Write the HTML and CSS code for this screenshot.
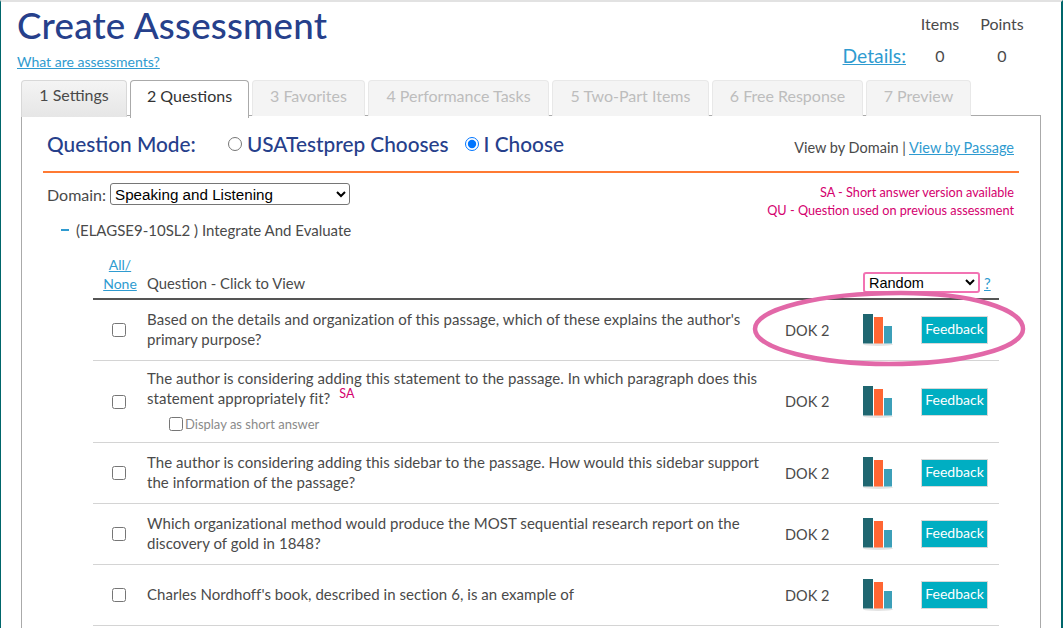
FILE: index.html
```html
<!DOCTYPE html>
<html lang="en">
<head>
<meta charset="utf-8">
<title>Create Assessment</title>
<link rel="stylesheet" href="styles.css">
</head>
<body>
<div class="page">
  <header class="head">
    <div class="head-left">
      <h1 class="title">Create Assessment</h1>
      <a class="link help" href="#">What are assessments?</a>
    </div>
    <div class="totals">
      <span></span><span class="tot-h">Items</span><span class="tot-h">Points</span>
      <a class="link details" href="#">Details:</a><span class="tot-v">0</span><span class="tot-v">0</span>
    </div>
  </header>
  <nav class="tabs">
    <div class="tab tab-done t1">1 Settings</div>
    <div class="tab tab-on t2">2 Questions</div>
    <div class="tab t3">3 Favorites</div>
    <div class="tab t4">4 Performance Tasks</div>
    <div class="tab t5">5 Two-Part Items</div>
    <div class="tab t6">6 Free Response</div>
    <div class="tab t7">7 Preview</div>
  </nav>
  <main class="panel">
    <div class="mode">
      <span class="mode-label">Question Mode:</span>
      <label class="mode-opt"><input type="radio" name="m"> USATestprep Chooses</label>
      <label class="mode-opt"><input type="radio" name="m" checked> I Choose</label>
      <span class="views">View by Domain | <a class="link" href="#">View by Passage</a></span>
    </div>
    <div class="domain-row">
      <label class="domain">Domain:
        <select class="sel-domain"><option>Speaking and Listening</option></select>
      </label>
      <div class="legend">
        <div>SA - Short answer version available</div>
        <div>QU - Question used on previous assessment</div>
      </div>
    </div>
    <div class="standard"><span class="minus"></span>(ELAGSE9-10SL2 ) Integrate And Evaluate</div>
    <section class="qtable">
      <div class="row row-head">
        <div class="allnone"><a class="link" href="#">All/</a><a class="link" href="#">None</a></div>
        <div class="qhead">Question - Click to View</div>
        <div class="sortcell"><select class="sel-sort"><option>Random</option></select> <a class="link" href="#">?</a></div>
      </div>
      <div class="row h61">
        <div class="cb"><input type="checkbox"></div>
        <div class="q">Based on the details and organization of this passage, which of these explains the author's primary purpose?</div>
        <div class="dok">DOK 2</div>
        <svg class="chart" viewBox="0 0 30 32"><use href="#bars"/></svg>
        <div class="fb">Feedback</div>
      </div>
      <div class="row h82">
        <div class="cb"><input type="checkbox"></div>
        <div class="q q-short">The author is considering adding this statement to the passage. In which paragraph does this statement appropriately fit? <sup class="sa">SA</sup>
          <label class="short"><input type="checkbox">Display as short answer</label>
        </div>
        <div class="dok">DOK 2</div>
        <svg class="chart" viewBox="0 0 30 32"><use href="#bars"/></svg>
        <div class="fb">Feedback</div>
      </div>
      <div class="row h61">
        <div class="cb"><input type="checkbox"></div>
        <div class="q">The author is considering adding this sidebar to the passage. How would this sidebar support the information of the passage?</div>
        <div class="dok">DOK 2</div>
        <svg class="chart" viewBox="0 0 30 32"><use href="#bars"/></svg>
        <div class="fb">Feedback</div>
      </div>
      <div class="row h61">
        <div class="cb"><input type="checkbox"></div>
        <div class="q">Which organizational method would produce the MOST sequential research report on the discovery of gold in 1848?</div>
        <div class="dok">DOK 2</div>
        <svg class="chart" viewBox="0 0 30 32"><use href="#bars"/></svg>
        <div class="fb">Feedback</div>
      </div>
      <div class="row h61">
        <div class="cb"><input type="checkbox"></div>
        <div class="q">Charles Nordhoff's book, described in section 6, is an example of</div>
        <div class="dok">DOK 2</div>
        <svg class="chart" viewBox="0 0 30 32"><use href="#bars"/></svg>
        <div class="fb">Feedback</div>
      </div>
    </section>
  </main>
  <svg class="defs" width="0" height="0">
    <defs>
      <g id="bars">
        <ellipse cx="15" cy="30.5" rx="15" ry="1.5" fill="#e4e4e4"/>
        <rect x="0" y="0" width="10" height="29.5" fill="#1f6670"/>
        <rect x="11" y="3" width="9" height="26.5" fill="#ff6633"/>
        <rect x="21" y="12" width="8" height="17.5" fill="#3c9fb8"/>
      </g>
    </defs>
  </svg>
  <svg class="circle" viewBox="0 0 280 84" width="280" height="84">
    <path d="M6 42C6 22 70 6 152 6C222 6 274 22 274 42C274 62 210 77 140 77C70 77 6 62 6 42Z" fill="none" stroke="#e268a8" stroke-width="4.5"/>
  </svg>
</div>
</body>
</html>
```
FILE: styles.css
```css
* { box-sizing: border-box; }
html, body { margin: 0; padding: 0; background: #fff; }
body { font-family: "Lato", "Liberation Sans", sans-serif; font-size: 14.5px; color: #4a4a4a; overflow: hidden; }
.page {
  position: relative;
  width: 1063px;
  height: 628px;
  overflow: hidden;
  border-top: 2px solid #e2e2e2;
  border-left: 1px solid #00666b;
  border-right: 2px solid #00666b;
  padding: 0 20px 0 20px;
}
.link { color: #2f9bd0; text-decoration: underline; }
.head { display: flex; justify-content: space-between; height: 78px; margin-left: -4px; }
.title { margin: 1px 0 0; font-size: 36.7px; line-height: 44px; font-weight: 500; color: #26408b; letter-spacing: .2px; }
.help { display: block; margin-top: 7px; font-size: 14px; line-height: 16px; }
.head-left { display: flex; flex-direction: column; }
.totals {
  display: grid;
  grid-template-columns: 66px 62px 62px;
  grid-template-rows: 30px 34px;
  margin: 6px 8px 0 0;
  justify-items: center;
  align-items: center;
  font-size: 16px;
}
.details { font-size: 19.3px; justify-self: end; margin-right: 3px; }
.tabs { display: flex; gap: 3px; height: 36px; position: relative; z-index: 2; align-items: flex-start; }
.tab {
  height: 36px;
  padding-bottom: 6px;
  display: flex; align-items: center; justify-content: center;
  background: #f4f4f4; color: #bdbdbd; font-size: 16px;
  border: 1px solid #e8e8e8; border-bottom: 0; border-radius: 4px 4px 0 0;
}
.tab-done { background: linear-gradient(#f4f4f4, #e6e6e6); color: #4a4a4a; height: 37px; border-color: #d8d8d8; padding-bottom: 9px; }
.tab-on { background: #fff; color: #333; height: 38px; border: 1px solid #aaa; border-bottom: 0; padding-bottom: 8px; }
.t1 { width: 106px; } .t2 { width: 119px; } .t3 { width: 113px; } .t4 { width: 181px; }
.t5 { width: 157px; } .t6 { width: 151px; } .t7 { width: 105px; }
.panel {
  width: 1020px;
  height: 560px;
  margin-top: -1px;
  border: 1px solid #aaa;
  padding: 0 21px 0 21px;
}
.mode {
  display: flex; align-items: center;
  height: 57px; border-bottom: 2px solid #ff7a33;
  padding-left: 4px;
  color: #26408b; font-size: 20.8px; font-weight: 500;
}
.mode-label { width: 181px; }
.mode-opt { display: flex; align-items: center; margin-right: 16px; white-space: nowrap; }
.mode-opt input { margin: 0 5px 0 0; width: 14px; height: 14px; }
.views { margin-left: auto; font-size: 14.5px; color: #4a4a4a; font-weight: 400; padding: 8px 5px 0 0; }
.domain-row { display: flex; justify-content: space-between; }
.domain { font-size: 16px; padding: 8px 0 0 4px; display: flex; align-items: center; gap: 4px; height: 34px; }
.sel-domain { width: 240px; height: 22px; font: 15.2px "Liberation Sans", sans-serif; color: #000; background: #fff; border: 1px solid #767676; border-radius: 3px; }
.legend { color: #d4006e; font-size: 12.7px; line-height: 18px; text-align: right; padding: 10px 5px 0 0; }
.standard { margin: 1px 0 0 18px; font-size: 15px; line-height: 20px; display: flex; align-items: center; }
.minus { width: 8px; height: 2px; background: #2f9bd0; margin: 0 7px 0 0; }
.qtable { width: 906px; margin: 12px 0 0 50px; }
.row {
  display: grid;
  grid-template-columns: 54px 638px 78px 58px 78px;
  align-items: center;
  border-bottom: 1px solid #d4d4d4;
  font-size: 15px;
}
.row-head { height: 48px; border-bottom: 2px solid #555; grid-template-columns: 54px 717px 135px; align-items: end; padding-bottom: 5px; }
.allnone { display: flex; flex-direction: column; align-items: center; line-height: 19px; font-size: 14px; }
.qhead { line-height: 19px; font-size: 14.8px; }
.sortcell { font-size: 15px; display: flex; align-items: center; gap: 4px; justify-self: start; margin: 0 0 0 -1px; }
.sel-sort { width: 117px; height: 21px; padding: 0; font: 14.5px "Liberation Sans", sans-serif; color: #000; background: #fff; border: 2px solid #f273b3; border-radius: 3px; }
.h61 { height: 61px; }
.h82 { height: 82px; }
.cb { text-align: center; display: flex; justify-content: center; padding-right: 2px; }
.cb input { margin: 0; width: 14px; height: 14px; }
.q { line-height: 20px; padding: 0 12px 2px 0; letter-spacing: .05px; }
.q-short { padding-bottom: 3px; }
.sa { color: #d4006e; font-size: 12.5px; line-height: 0; margin-left: 5px; }
.short { display: flex; align-items: center; gap: 2px; font-size: 13px; color: #8a8a8a; margin: 7px 0 0 22px; line-height: 18px; letter-spacing: 0; }
.short input { margin: 0; width: 14px; height: 14px; }
.dok { font-size: 14.5px; }
.chart { width: 30px; height: 32px; }
.fb {
  width: 67px; height: 28px;
  padding-bottom: 4px;
  display: flex; align-items: center; justify-content: center;
  background: #00aec2; color: #fff; font-size: 14px;
  border: 1px solid #d8d8d8;
}
.defs { position: absolute; }
.circle { position: absolute; left: 748px; top: 285px; pointer-events: none; }
```
